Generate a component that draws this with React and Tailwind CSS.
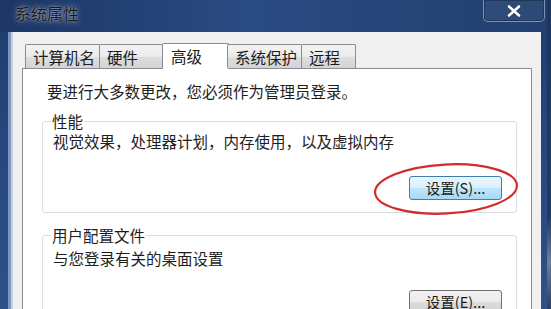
import React from "react";

const tabs = [
  { label: "计算机名", w: "w-[75px]" },
  { label: "硬件", w: "w-[64px]" },
  { label: "高级", w: "w-[67px]", active: true },
  { label: "系统保护", w: "w-[75px]" },
  { label: "远程", w: "w-[55px]" },
];

function WinButton({ children, focused }) {
  return (
    <button
      className={`w-[93px] h-[24px] rounded-[3px] border text-[14.5px] leading-none text-[#1a1a1a] flex items-center justify-center ${
        focused
          ? "border-[#3c7fb1] bg-[linear-gradient(180deg,#eaf6fd_0%,#d9f0fc_50%,#bee6fd_51%,#a7d9f5_100%)]"
          : "border-[#707070] bg-[linear-gradient(180deg,#f2f2f2_0%,#ebebeb_50%,#dddddd_51%,#cfcfcf_100%)]"
      }`}
    >
      {children}
    </button>
  );
}

export default function App() {
  return (
    <div className="w-[551px] h-[309px] overflow-hidden flex bg-[#1b2f55] font-['Noto_Sans_CJK_SC',sans-serif]">
      {/* window */}
      <div className="w-[547px] h-full flex flex-col bg-[linear-gradient(180deg,#1f3b6c_0%,#26467c_40%,#2f5088_100%)]">
        {/* title bar */}
        <div className="h-[32px] shrink-0 flex items-start justify-between bg-[linear-gradient(90deg,#1c3665_0%,#2a4b83_45%,#22406f_100%)]">
          <div className="pl-[15px] pt-[3px] text-[16px] leading-[20px] text-[#1a1a1a] [text-shadow:0_0_6px_rgba(255,255,255,0.55),0_0_2px_rgba(255,255,255,0.5)]">
            系统属性
          </div>
          <div className="mr-[2px] w-[62px] h-[22px] rounded-b-[5px] border border-t-0 border-white/40 bg-white/5 flex items-center justify-center shadow-[inset_0_0_0_1px_rgba(0,0,0,0.25)]">
            <svg width="14" height="12" viewBox="0 0 14 12">
              <path d="M2 1.5 L12 10.5 M12 1.5 L2 10.5" stroke="#2a2a2a" strokeWidth="4" strokeLinecap="round" opacity="0.35" />
              <path d="M2 1.5 L12 10.5 M12 1.5 L2 10.5" stroke="#ffffff" strokeWidth="2.6" strokeLinecap="round" />
            </svg>
          </div>
        </div>

        {/* body */}
        <div className="flex-1 min-h-0 overflow-hidden flex pl-[8px]">
          <div className="w-[3px] bg-[#7d96bb]" />
          <div className="w-[2px] bg-[#c6d0de]" />
          <div className="flex-1 mr-[6px] bg-[#f0f0f0] flex flex-col pl-[9px] pr-[9px] pt-[11px]">
            {/* tabs */}
            <div className="flex shrink-0 items-end pl-[3px] h-[26px] relative z-10 -mb-[1px]">
              {tabs.map((t) =>
                t.active ? (
                  <div
                    key={t.label}
                    className={`${t.w} h-[26px] bg-white border border-b-0 border-[#898c95] rounded-t-[2px] pl-[8px] pt-[2px] text-[15.5px] leading-[20px] text-[#1a1a1a] -mx-[1px]`}
                  >
                    {t.label}
                  </div>
                ) : (
                  <div
                    key={t.label}
                    className={`${t.w} h-[24px] mb-[1px] border border-b-0 border-[#898c95] rounded-t-[2px] bg-[linear-gradient(180deg,#f3f3f3_0%,#ebebeb_50%,#dedede_51%,#d4d4d4_100%)] pl-[7px] pt-[2px] text-[15.5px] leading-[20px] text-[#1a1a1a] -ml-[1px] first:ml-0`}
                  >
                    {t.label}
                  </div>
                )
              )}
            </div>

            {/* panel */}
            <div className="flex-1 shrink-0 bg-white border border-[#898c95] text-[15.5px] leading-[20px] text-[#1e1e1e]">
              <p className="pl-[24px] pt-[12px]">要进行大多数更改，您必须作为管理员登录。</p>

              <fieldset className="relative ml-[19px] mr-[14px] mt-[10px] border border-[#d5dfe5] rounded-[3px] pl-[10px] pr-[14px] pb-[12px]">
                <legend className="-ml-[2px] px-[1px] leading-[20px]">性能</legend>
                <p>视觉效果，处理器计划，内存使用，以及虚拟内存</p>
                <div className="flex justify-end mt-[25px]">
                  <WinButton focused>设置(S)...</WinButton>
                </div>
                <svg
                  className="absolute left-[328px] top-[30px] pointer-events-none"
                  width="150"
                  height="56"
                  viewBox="0 0 150 56"
                >
                  <ellipse
                    cx="75"
                    cy="28"
                    rx="71"
                    ry="24.5"
                    fill="none"
                    stroke="#d42a2f"
                    strokeWidth="2.2"
                    transform="rotate(-3 75 28)"
                  />
                </svg>
              </fieldset>

              <fieldset className="ml-[19px] mr-[14px] mt-[12px] border border-[#d5dfe5] rounded-[3px] pl-[10px] pr-[14px] pb-[12px]">
                <legend className="-ml-[2px] px-[1px] leading-[20px]">用户配置文件</legend>
                <p className="mt-[3px]">与您登录有关的桌面设置</p>
                <div className="flex justify-end mt-[22px]">
                  <WinButton>设置(E)...</WinButton>
                </div>
              </fieldset>
            </div>
          </div>
        </div>
      </div>
      {/* desktop edge */}
      <div className="flex-1 bg-[linear-gradient(180deg,#1e3560_0%,#22395f_70%,#6d7f99_85%,#2a3d5e_100%)]" />
    </div>
  );
}
